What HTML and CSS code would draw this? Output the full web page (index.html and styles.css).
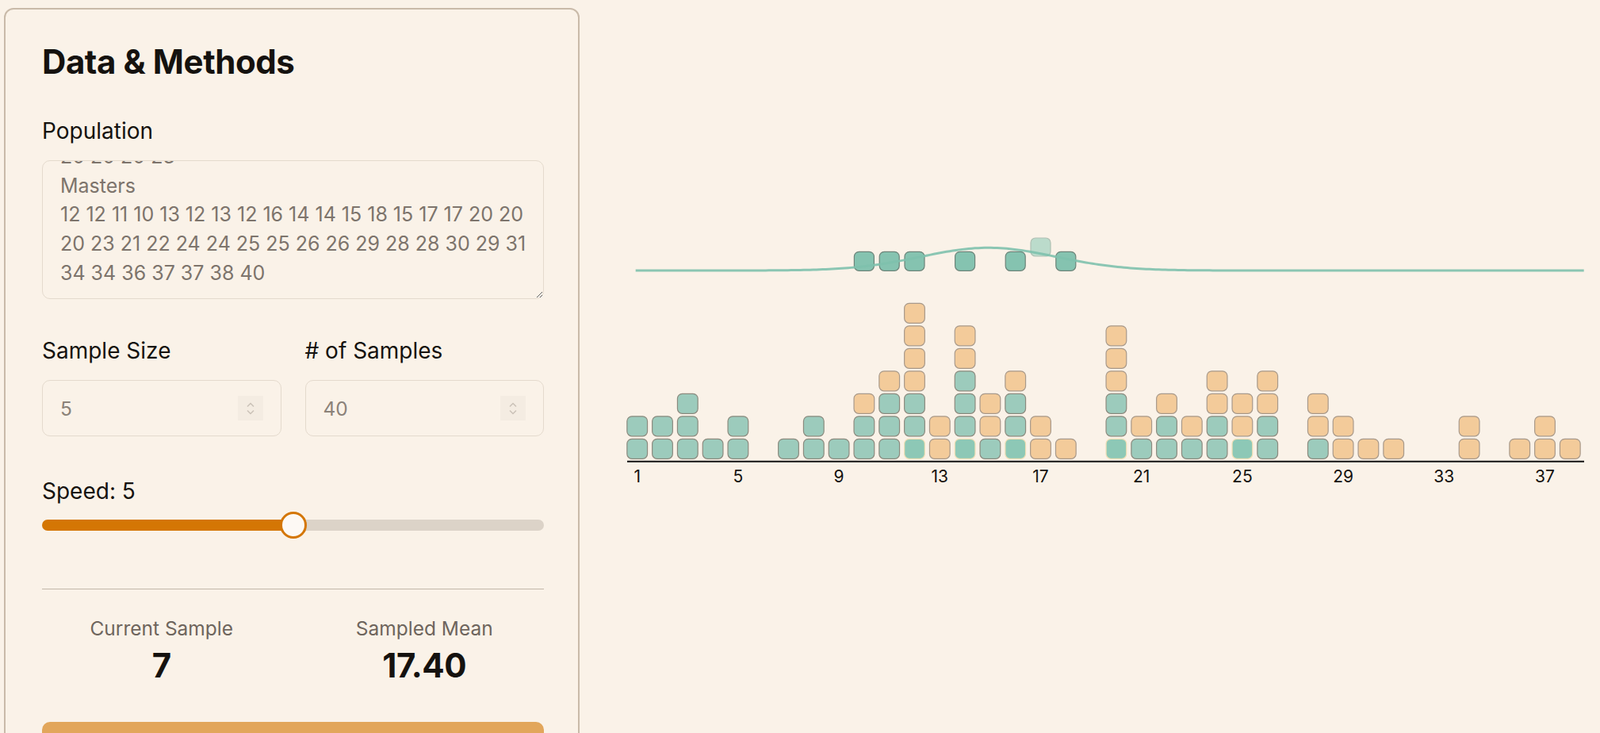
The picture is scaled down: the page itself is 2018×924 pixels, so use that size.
FILE: index.html
```html
<!DOCTYPE html>
<html lang="en">
<head>
    <meta charset="UTF-8">
    <meta name="viewport" content="width=device-width, initial-scale=1.0">
    <title>Sampling Distribution Explorer</title>
    <link rel="stylesheet" href="styles.css">
</head>
<body>
    <div class="app">
        <!-- left: controls -->
        <aside class="panel">
            <h1 class="panel-title">Data &amp; Methods</h1>

            <div class="field">
                <label class="field-label" for="population">Population</label>
                <textarea id="population" class="population-input" spellcheck="false">Bachelors
1 1 2 2 3 3 3 4 5 5 7 8 8 9 10 10 11 11 11 12 12 12
14 14 14 14 15 16 16 16 21 22 22 24 24 25 26 26 28
20 20 20 23
Masters
12 12 11 10 13 12 13 12 16 14 14 15 18 15 17 17 20 20
20 23 21 22 24 24 25 25 26 26 29 28 28 30 29 31
34 34 36 37 37 38 40</textarea>
            </div>

            <div class="field-row">
                <div class="field">
                    <label class="field-label" for="sample-size">Sample Size</label>
                    <div class="num-field">
                        <input id="sample-size" type="number" value="5">
                        <span class="spin">
                            <svg width="12" height="20" viewBox="0 0 12 20"><path d="M2 7.5 6 3.5l4 4M2 12.5l4 4 4-4"/></svg>
                        </span>
                    </div>
                </div>
                <div class="field">
                    <label class="field-label" for="sample-count"># of Samples</label>
                    <div class="num-field">
                        <input id="sample-count" type="number" value="40">
                        <span class="spin">
                            <svg width="12" height="20" viewBox="0 0 12 20"><path d="M2 7.5 6 3.5l4 4M2 12.5l4 4 4-4"/></svg>
                        </span>
                    </div>
                </div>
            </div>

            <div class="field">
                <label class="field-label speed-label" for="speed">Speed: 5</label>
                <input id="speed" class="speed" type="range" min="0" max="10" value="5">
            </div>

            <hr class="divider">

            <div class="stats">
                <div class="stat">
                    <div class="stat-label">Current Sample</div>
                    <div class="stat-value">7</div>
                </div>
                <div class="stat">
                    <div class="stat-label">Sampled Mean</div>
                    <div class="stat-value">17.40</div>
                </div>
            </div>

            <button class="run-btn">Draw Samples</button>
        </aside>

        <!-- right: dot plot -->
        <main class="chart">
            <svg id="chart" width="1287" height="640" viewBox="731 10 1287 640"></svg>
        </main>
    </div>

    <script src="script.js"></script>
</body>
</html>
```

FILE: styles.css
```css
* {
    margin: 0;
    padding: 0;
    box-sizing: border-box;
}

:root {
    --bg: #faf2e8;
    --ink: #15120f;
    --muted: #7c736b;
    --field-border: #e4dacd;
    --accent: #d47604;
    --track: #dcd3c8;
}

body {
    font-family: Inter, "Noto Sans", sans-serif;
    background: var(--bg);
    color: var(--ink);
    overflow: hidden;
}

.app {
    display: flex;
    align-items: flex-start;
    padding: 10px 0 0 5px;
    height: 100vh;
}

/* left panel */
.panel {
    flex: none;
    width: 726px;
    min-width: 0;
    display: flex;
    flex-direction: column;
    border: 2px solid #c9baa9;
    border-radius: 12px;
    padding: 41px 43px 40px 46px;
}

.panel-title {
    font-size: 42px;
    line-height: 1.2;
    font-weight: 700;
    letter-spacing: -0.01em;
    margin-bottom: 41px;
}

.field {
    min-width: 0;
}

.field-label {
    display: block;
    font-size: 28px;
    line-height: 42px;
    margin-bottom: 16px;
}

.speed-label {
    margin-bottom: 15px;
}

.population-input {
    display: block;
    width: 100%;
    height: 175px;
    padding: 14px 22px;
    border: 1px solid var(--field-border);
    border-radius: 10px;
    background: transparent;
    font-family: inherit;
    font-size: 25px;
    line-height: 36.6px;
    color: #7d746c;
    white-space: pre;
    overflow: hidden;
    resize: vertical;
    outline: none;
}

.field-row {
    display: grid;
    grid-template-columns: repeat(2, minmax(0, 1fr));
    gap: 30px;
    margin-top: 44px;
}

.field-row + .field {
    margin-top: 48px;
}

.num-field {
    display: flex;
    align-items: center;
    height: 71px;
    padding: 0 22px;
    border: 1px solid var(--field-border);
    border-radius: 10px;
}

.num-field input {
    flex: 1;
    width: 0;
    min-width: 0;
    border: none;
    background: transparent;
    font-family: inherit;
    font-size: 24.5px;
    color: #8b8279;
    outline: none;
    -moz-appearance: textfield;
}

.num-field input::-webkit-inner-spin-button,
.num-field input::-webkit-outer-spin-button {
    -webkit-appearance: none;
    margin: 0;
}

.spin {
    display: flex;
    align-items: center;
    justify-content: center;
    width: 32px;
    height: 31px;
    background: #f4ece2;
}

.spin path {
    fill: none;
    stroke: #cbc2b8;
    stroke-width: 1.5;
}

/* speed slider */
.speed {
    -webkit-appearance: none;
    appearance: none;
    display: block;
    width: 100%;
    height: 14px;
    border-radius: 7px;
    background: linear-gradient(to right, var(--accent) 0 50%, var(--track) 50% 100%);
    outline: none;
}

.speed::-webkit-slider-thumb {
    -webkit-appearance: none;
    width: 34px;
    height: 34px;
    border-radius: 50%;
    background: #fdf9f4;
    border: 3px solid var(--accent);
}

.divider {
    border: none;
    border-top: 1px solid #c3b7a9;
    margin-top: 73px;
}

/* stats */
.stats {
    display: grid;
    grid-template-columns: repeat(2, minmax(0, 1fr));
    gap: 30px;
    margin-top: 31px;
    text-align: center;
}

.stat-label {
    font-size: 24.5px;
    line-height: 1.5;
    color: #6e655d;
}

.stat-value {
    font-size: 42px;
    line-height: 1.2;
    font-weight: 700;
    margin-top: 3px;
    letter-spacing: -0.01em;
}

.run-btn {
    margin-top: 45px;
    height: 100px;
    padding-top: 40px;
    border: none;
    border-radius: 10px;
    background: #e2a65b;
    color: #fff;
    font-family: inherit;
    font-size: 28px;
    font-weight: 600;
}

/* chart */
.chart {
    flex: 1;
    min-width: 0;
}

.chart svg {
    display: block;
}

.block {
    stroke-width: 1.2;
}

.block.grp-0 {
    fill: #9ccbbc;
    stroke: #8b8a7e;
}

.block.grp-0.picked {
    fill: #8dc8b6;
    stroke: #f0dfb6;
}

.block.grp-1 {
    fill: #f3cb9a;
    stroke: #a8998a;
}

.mean-block {
    fill: #85c3b0;
    stroke: #6c8479;
    stroke-width: 1.2;
}

.mean-block.current {
    fill: #b1d8c6;
    stroke: #a3b8ab;
}

.density {
    fill: none;
    stroke: #7ec1ad;
    stroke-width: 3;
    stroke-opacity: 0.9;
}

.axis-line {
    stroke: #111;
    stroke-width: 2;
}

.tick {
    font-family: Inter, "Noto Sans", sans-serif;
    font-size: 21px;
    fill: #15120f;
    text-anchor: middle;
}
```

FILE: script.js
```js
const NS = 'http://www.w3.org/2000/svg';
const svg = document.getElementById('chart');
const popInput = document.getElementById('population');

// current sample + the means of previous samples
const sample = [12, 14, 16, 20, 25];
const sampleMeans = [10, 11, 12, 14, 16, 18];
const currentMean = 17;

// scale
const x = v => 803.7 + (v - 1) * 31.8;
const BLOCK_W = 25.7;
const BLOCK_H = 25;
const ROW = 28.5;
const BASE = 553.3;

function make(tag, attrs, parent) {
    const node = document.createElementNS(NS, tag);
    for (const k in attrs) node.setAttribute(k, attrs[k]);
    (parent || svg).appendChild(node);
    return node;
}

// parse textarea: a line with letters opens a group
function parseGroups(text) {
    const groups = [];
    text.split('\n').forEach(line => {
        line = line.trim();
        if (!line) return;
        if (/[a-z]/i.test(line)) {
            groups.push({ name: line, values: [] });
        } else if (groups.length) {
            line.split(/\s+/).forEach(n => groups[groups.length - 1].values.push(+n));
        }
    });
    return groups;
}

const groups = parseGroups(popInput.value);
const heights = {};

groups.forEach((g, gi) => {
    g.values.slice().sort((a, b) => a - b).forEach(v => {
        const row = heights[v] || 0;
        heights[v] = row + 1;
        let cls = 'block grp-' + gi;
        if (gi === 0 && row === 0 && sample.includes(v)) cls += ' picked';
        make('rect', {
            class: cls,
            x: x(v) - BLOCK_W / 2,
            y: BASE - row * ROW,
            width: BLOCK_W,
            height: BLOCK_H,
            rx: 6
        });
    });
});

// axis
make('line', { class: 'axis-line', x1: 791, x2: 1998, y1: 581.7, y2: 581.7 });
for (let v = 1; v <= 37; v += 4) {
    make('text', { class: 'tick', x: x(v), y: 608.3 }).textContent = v;
}

// sampling distribution row
sampleMeans.forEach(m => {
    make('rect', { class: 'mean-block', x: x(m) - 12.5, y: 317.3, width: 25, height: 24, rx: 6 });
});
make('rect', { class: 'mean-block current', x: x(currentMean) - 12.5, y: 300, width: 25, height: 23, rx: 6, opacity: 0.85 });

// density curve
let d = '';
for (let px = 801.7; px <= 1998; px += 4) {
    const y = 341 - 28.7 * Math.exp(-Math.pow(px - 1246.6, 2) / (2 * 85 * 85));
    d += (d ? 'L' : 'M') + px.toFixed(1) + ' ' + y.toFixed(2);
}
make('path', { class: 'density', d: d });

// show the end of the data
popInput.scrollTop = popInput.scrollHeight;
```
